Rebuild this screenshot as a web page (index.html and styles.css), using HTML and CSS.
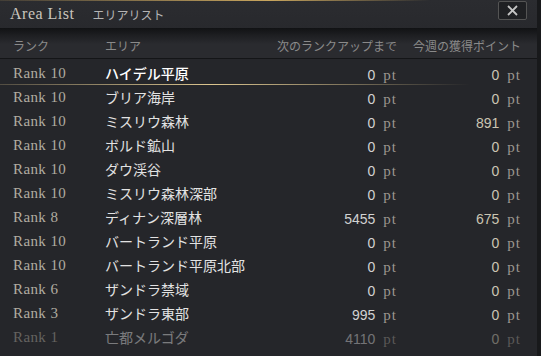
FILE: index.html
```html
<!DOCTYPE html>
<html lang="ja">
<head>
    <meta charset="UTF-8">
    <meta name="viewport" content="width=device-width, initial-scale=1.0">
    <title>Area List</title>
    <link rel="stylesheet" href="styles.css">
</head>
<body>
    <div class="window">
        <div class="titlebar">
            <span class="title">Area List</span>
            <span class="subtitle">エリアリスト</span>
            <button class="close" aria-label="close">
                <svg width="11" height="11" viewBox="0 0 11 11"><path d="M1 1L10 10M10 1L1 10" stroke="#c4c4c4" stroke-width="1.8"/></svg>
            </button>
        </div>

        <div class="head row">
            <div>ランク</div>
            <div>エリア</div>
            <div class="right">次のランクアップまで</div>
            <div class="right">今週の獲得ポイント</div>
        </div>

        <div class="list">
            <div class="row selected">
                <div class="rank">Rank 10</div><div class="name">ハイデル平原</div>
                <div class="right"><span class="num">0</span><span class="pt">pt</span></div>
                <div class="right week"><span class="num">0</span><span class="pt">pt</span></div>
            </div>
            <div class="row">
                <div class="rank">Rank 10</div><div class="name">ブリア海岸</div>
                <div class="right"><span class="num">0</span><span class="pt">pt</span></div>
                <div class="right week"><span class="num">0</span><span class="pt">pt</span></div>
            </div>
            <div class="row">
                <div class="rank">Rank 10</div><div class="name">ミスリウ森林</div>
                <div class="right"><span class="num">0</span><span class="pt">pt</span></div>
                <div class="right week"><span class="num">891</span><span class="pt">pt</span></div>
            </div>
            <div class="row">
                <div class="rank">Rank 10</div><div class="name">ボルド鉱山</div>
                <div class="right"><span class="num">0</span><span class="pt">pt</span></div>
                <div class="right week"><span class="num">0</span><span class="pt">pt</span></div>
            </div>
            <div class="row">
                <div class="rank">Rank 10</div><div class="name">ダウ渓谷</div>
                <div class="right"><span class="num">0</span><span class="pt">pt</span></div>
                <div class="right week"><span class="num">0</span><span class="pt">pt</span></div>
            </div>
            <div class="row">
                <div class="rank">Rank 10</div><div class="name">ミスリウ森林深部</div>
                <div class="right"><span class="num">0</span><span class="pt">pt</span></div>
                <div class="right week"><span class="num">0</span><span class="pt">pt</span></div>
            </div>
            <div class="row">
                <div class="rank">Rank 8</div><div class="name">ディナン深層林</div>
                <div class="right"><span class="num">5455</span><span class="pt">pt</span></div>
                <div class="right week"><span class="num">675</span><span class="pt">pt</span></div>
            </div>
            <div class="row">
                <div class="rank">Rank 10</div><div class="name">バートランド平原</div>
                <div class="right"><span class="num">0</span><span class="pt">pt</span></div>
                <div class="right week"><span class="num">0</span><span class="pt">pt</span></div>
            </div>
            <div class="row">
                <div class="rank">Rank 10</div><div class="name">バートランド平原北部</div>
                <div class="right"><span class="num">0</span><span class="pt">pt</span></div>
                <div class="right week"><span class="num">0</span><span class="pt">pt</span></div>
            </div>
            <div class="row">
                <div class="rank">Rank 6</div><div class="name">ザンドラ禁域</div>
                <div class="right"><span class="num">0</span><span class="pt">pt</span></div>
                <div class="right week"><span class="num">0</span><span class="pt">pt</span></div>
            </div>
            <div class="row">
                <div class="rank">Rank 3</div><div class="name">ザンドラ東部</div>
                <div class="right"><span class="num">995</span><span class="pt">pt</span></div>
                <div class="right week"><span class="num">0</span><span class="pt">pt</span></div>
            </div>
            <div class="row faded">
                <div class="rank">Rank 1</div><div class="name">亡都メルゴダ</div>
                <div class="right"><span class="num">4110</span><span class="pt">pt</span></div>
                <div class="right week"><span class="num">0</span><span class="pt">pt</span></div>
            </div>
        </div>
    </div>
</body>
</html>
```

FILE: styles.css
```css
body {
    margin: 0;
    background: #242529;
    font-family: "Noto Sans CJK JP", "Noto Sans", sans-serif;
    overflow: hidden;
}
.window {
    width: 537px;
    height: 356px;
    border-right: 4px solid #18191b;
    background: #25262a;
}
.titlebar {
    position: relative;
    height: 28px;
    display: flex;
    align-items: center;
    padding-left: 10px;
    background: linear-gradient(#2b2c30, #28292d);
}
.titlebar::before {
    content: "";
    position: absolute;
    left: 0;
    right: 0;
    top: 0;
    height: 1px;
    background: linear-gradient(90deg, rgba(201,164,92,0.15), #c9a65e 50%, rgba(201,164,92,0) 80%);
}
.title {
    font-family: "Liberation Serif", serif;
    font-size: 16px;
    letter-spacing: 0.5px;
    color: #c9c5bd;
}
.subtitle {
    margin-left: 18px;
    font-size: 12px;
    color: #b4b4b4;
}
.close {
    position: absolute;
    right: 10px;
    top: 1px;
    width: 29px;
    height: 19px;
    padding: 0;
    display: flex;
    align-items: center;
    justify-content: center;
    background: #1f2023;
    border: 1px solid #545454;
    border-radius: 2px;
}
.row {
    display: grid;
    grid-template-columns: 92px 1fr 124px 124px;
    align-items: center;
    padding: 0 16px 0 13px;
    height: 24px;
    white-space: nowrap;
}
.right {
    text-align: right;
}
.head {
    height: 31px;
    padding-top: 5px;
    box-sizing: border-box;
    font-size: 12px;
    color: #8a8a8a;
    background: linear-gradient(#111214 0px, #1d1e21 7px, #2a2b2f 16px, #2a2b2f);
    border-bottom: 1px solid #141517;
}
.list {
    padding-top: 2px;
}
.rank {
    font-family: "Liberation Serif", serif;
    font-size: 15px;
    letter-spacing: 0.4px;
    color: #b1aca1;
}
.name {
    font-size: 14px;
    color: #e2e2e2;
}
.num {
    font-family: "Liberation Sans", sans-serif;
    font-size: 14px;
    color: #d2d2d2;
}
.week .num {
    color: #cbc5b2;
}
.pt {
    margin-left: 8px;
    font-family: "Liberation Serif", serif;
    font-size: 15px;
    letter-spacing: 1px;
    color: #9c978f;
}
.selected {
    position: relative;
}
.selected .name {
    font-weight: 500;
    color: #ffffff;
}
.selected::after {
    content: "";
    position: absolute;
    left: 0;
    width: 470px;
    bottom: 0;
    height: 1px;
    background: linear-gradient(90deg, rgba(216,192,138,0.25), #dcc58f 45%, rgba(216,192,138,0));
}
.faded {
    opacity: 0.45;
}
```
